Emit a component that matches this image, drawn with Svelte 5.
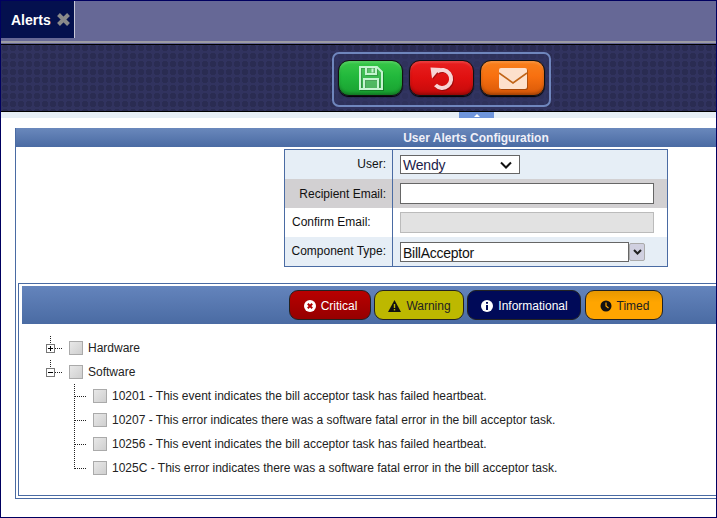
<script>
  const children = [
    '10201 - This event indicates the bill acceptor task has failed heartbeat.',
    '10207 - This error indicates there was a software fatal error in the bill acceptor task.',
    '10256 - This event indicates the bill acceptor task has failed heartbeat.',
    '1025C - This error indicates there was a software fatal error in the bill acceptor task.'
  ];
</script>

<div class="page">
  <div class="tabbar">
    <div class="tab">
      <span>Alerts</span>
      <svg width="15" height="15" viewBox="0 0 15 15"><path d="M2.5 2.5 12.5 12.5M12.5 2.5 2.5 12.5" stroke="#8a8a8a" stroke-width="4" /></svg>
    </div>
  </div>
  <div class="rule"></div>
  <div class="band">
    <div class="group">
      <button class="big green" aria-label="Save">
        <svg class="glyph" width="24" height="24" viewBox="0 0 24 24" fill="rgba(255,255,255,.12)" stroke="#c4f4d0" stroke-width="2"><path d="M1 1H18L23 6V23H1Z"/><path d="M7 1V8H17V1M13.5 2.5V6.5" /><path d="M5 23V13H19V23"/></svg>
      </button>
      <button class="big red" aria-label="Undo">
        <svg class="glyph" width="26" height="26" viewBox="0 0 26 26" fill="none"><path d="M8 6.5A9 9 0 1 1 6.5 20" stroke="#f8d4d4" stroke-width="4"/><path d="M1.5 2.5 12 3 3 13.5Z" fill="#f8d4d4"/></svg>
      </button>
      <button class="big orange" aria-label="Mail">
        <svg class="glyph" width="28" height="21" viewBox="0 0 28 21"><rect x="0" y="0" width="28" height="21" rx="2" fill="#fde0cc"/><path d="M0 5 14 15 28 5" fill="none" stroke="#c06418" stroke-width="1.6"/></svg>
      </button>
    </div>
  </div>
  <div class="strip"><div class="handle"><i></i></div></div>

  <div class="panel">
    <div class="title">User Alerts Configuration</div>
    <div class="form">
      <div class="row blue"><label>User:</label><div class="cell"><div class="select"><span>Wendy</span><svg width="12" height="8" viewBox="0 0 12 8"><path d="M1 1.5 6 6.5 11 1.5" fill="none" stroke="#111" stroke-width="2"/></svg></div></div></div>
      <div class="row gray"><label>Recipient Email:</label><div class="cell"><div class="input"></div></div></div>
      <div class="row white"><label class="start">Confirm Email:</label><div class="cell"><div class="input off"></div></div></div>
      <div class="row blue"><label>Component Type:</label><div class="cell combo"><div class="input value">BillAcceptor</div><div class="drop"><svg width="9" height="6" viewBox="0 0 9 6"><path d="M1 1 4.5 4.5 8 1" fill="none" stroke="#222" stroke-width="2"/></svg></div></div></div>
    </div>

    <div class="inner">
      <div class="toolbar">
        <button class="chip critical">
          <svg width="12" height="12" viewBox="0 0 12 12"><circle cx="6" cy="6" r="6" fill="#fff"/><path d="M3.8 3.8 8.2 8.2M8.2 3.8 3.8 8.2" stroke="#b00000" stroke-width="2"/></svg>Critical
        </button>
        <button class="chip warning">
          <svg width="13" height="12" viewBox="0 0 13 12"><path d="M6.5 0 13 12H0Z" fill="#111"/><path d="M6.5 4V8M6.5 9V10.5" stroke="#bdb800" stroke-width="1.4"/></svg>Warning
        </button>
        <button class="chip info">
          <svg width="12" height="12" viewBox="0 0 12 12"><circle cx="6" cy="6" r="6" fill="#fff"/><path d="M6 5V10M6 2V3.8" stroke="#000a58" stroke-width="2"/></svg>Informational
        </button>
        <button class="chip timed">
          <svg width="12" height="12" viewBox="0 0 12 12"><circle cx="6" cy="6" r="5.5" fill="#111"/><path d="M6 2.5V6L8.5 8" fill="none" stroke="#ffa500" stroke-width="1.2"/></svg>Timed
        </button>
      </div>

      <div class="tree">
        <div class="node">
          <svg class="twig" width="27" height="24" viewBox="0 0 27 24"><path d="M8.5 0V8M13 12.5H21" stroke="#222" stroke-dasharray="1 1" fill="none"/><rect x="4.5" y="8.5" width="8" height="8" fill="#fff" stroke="#777"/><path d="M6 12.5H11M8.5 10V15" stroke="#000"/></svg>
          <span class="check"></span><span>Hardware</span>
        </div>
        <div class="node">
          <svg class="twig" width="27" height="24" viewBox="0 0 27 24"><path d="M8.5 0V8M13 12.5H21" stroke="#222" stroke-dasharray="1 1" fill="none"/><rect x="4.5" y="8.5" width="8" height="8" fill="#fff" stroke="#777"/><path d="M6 12.5H11" stroke="#000"/></svg>
          <span class="check"></span><span>Software</span>
        </div>
        {#each children as text, i}
          <div class="node">
            <svg class="twig" width="51" height="24" viewBox="0 0 51 24"><path d={i === 3 ? 'M32.5 0V13M33 12.5H45' : 'M32.5 0V24M33 12.5H45'} stroke="#222" stroke-dasharray="1 1" fill="none"/></svg>
            <span class="check"></span><span>{text}</span>
          </div>
        {/each}
      </div>
    </div>
  </div>
</div>

<style>
  :global(body) { margin: 0; background: #fff; }
  .page {
    box-sizing: border-box; width: 717px; height: 518px; overflow: hidden;
    border: 1px solid #000060; font: 12px "Liberation Sans", Arial, sans-serif; color: #111; background: #fff;
  }
  button { font: inherit; padding: 0; cursor: pointer; }
  .tabbar { height: 40px; background: #666896; display: flex; align-items: flex-start; }
  .tab {
    box-sizing: border-box; width: 74px; height: 37px; background: #04104e; border-right: 1px solid #c8c8d8;
    color: #fff; font-weight: bold; display: flex; align-items: center; gap: 5px; padding-left: 10px;
  }
  .tab span { font-size: 14px; }
  .rule { height: 4px; box-sizing: border-box; background: #666896; border-top: 2px solid #9c9ca4; border-bottom: 1px solid #000; }
  .band {
    height: 67px; box-sizing: border-box; padding: 7px 0 0 331px; display: flex;
    border-bottom: 1px solid #000;
    background: #31335f radial-gradient(circle at 4px 4px, #2a2c52 3px, transparent 3.5px) 0 -1px / 8px 8px;
  }
  .group {
    box-sizing: border-box; width: 219px; height: 55px; border: 2px solid #6f86bd; border-radius: 7px;
    display: flex; gap: 6px; padding: 6px 4px; background: rgba(50, 54, 100, .5);
  }
  .big {
    box-sizing: border-box; width: 65px; height: 36px; border: 1px solid #111; border-radius: 11px;
    display: flex; align-items: center; justify-content: center;
    box-shadow: 0 1px 1px #000, inset 0 -2px 3px rgba(0, 0, 0, .25), inset 0 2px 2px rgba(255, 255, 255, .14);
  }
  .glyph { filter: drop-shadow(1px 1px 0 rgba(0, 0, 0, .25)); }
  .green { background: linear-gradient(#38c848, #22b83c 45%, #18a030); }
  .red { background: linear-gradient(#e82020, #e01010 50%, #c40a0a); }
  .orange { background: linear-gradient(#f8801c, #f87010 45%, #d85808); }
  .strip { height: 6px; background: #e6eef6; position: relative; }
  .handle {
    position: absolute; left: 458px; top: 0; width: 35px; height: 6px; background: #6f95dc;
    display: flex; align-items: center; justify-content: center;
  }
  .handle i { width: 0; height: 0; border: 3px solid transparent; border-top: 0; border-bottom-color: #fff; }
  .panel {
    box-sizing: border-box; width: 701px; margin: 10px 0 0 14px; height: 371px;
    border-left: 1px solid #4a6ba3; border-bottom: 1px solid #4a6ba3;
  }
  .title {
    height: 19px; line-height: 20px; text-align: center; font-weight: bold; color: #f0f0f8; padding-left: 220px;
    background: linear-gradient(#6a88bc, #4a6ba3);
  }
  .form {
    box-sizing: border-box; width: 384px; height: 118px; margin: 2px 0 0 268px; border: 1px solid #4a6ba3;
    display: flex; flex-direction: column;
  }
  .row { flex: 1; display: grid; grid-template-columns: 108px 1fr; }
  .blue { background: #e6eef6; } .gray { background: #d2d0d2; } .white { background: #fff; }
  label { display: flex; align-items: center; justify-content: flex-end; padding: 0 6px 2px 0; border-right: 1px solid #4a6ba3; }
  .gray label { padding-bottom: 0; }
  label.start { justify-content: flex-start; padding-left: 7px; }
  .cell { display: flex; align-items: center; padding-left: 7px; }
  .select {
    box-sizing: border-box; width: 120px; height: 19px; border: 1px solid #666; background: #fff;
    display: flex; justify-content: space-between; align-items: center; padding: 0 7px 0 2px; font-size: 14px; color: #1c1c4a;
    letter-spacing: -0.2px;
  }
  .input { box-sizing: border-box; width: 254px; height: 21px; border: 1px solid #666; background: #fff; }
  .input.off { background: #e2e2e2; border-color: #bbb; }
  .input.value { width: 229px; height: 20px; line-height: 20px; padding-left: 2px; font-size: 14px; letter-spacing: -0.25px; }
  .drop {
    box-sizing: border-box; width: 16px; height: 18px; background: #d0d0e0; border: 1px solid #aaa; border-radius: 2px;
    display: flex; align-items: center; justify-content: center;
  }
  .inner {
    box-sizing: border-box; margin: 16px 0 0 2px; height: 213px; width: 698px;
    border: solid #4a6ba3; border-width: 1px 0 1px 1px; padding: 2px 0 0 3px;
  }
  .toolbar {
    height: 38px; box-sizing: border-box; padding: 4px 0 0 267px; display: flex; gap: 3px;
    background: linear-gradient(#6484bc, #4a6ba3);
  }
  .chip {
    box-sizing: border-box; height: 30px; border: 1px solid #222; border-radius: 9px; padding: 1px 0 0 1px;
    display: flex; align-items: center; justify-content: center; gap: 5px;
  }
  .critical { width: 82px; background: linear-gradient(#b80000, #960000); color: #fff; }
  .warning { width: 90px; background: #bdb800; color: #222; }
  .info { width: 114px; background: #000a58; color: #fff; margin-right: 1px; }
  .timed { width: 78px; background: linear-gradient(#e89800, #ffa500 40%); color: #222; }
  .tree { padding-top: 12px; }
  .node { height: 24px; display: flex; align-items: center; padding-left: 20px; color: #222; }
  .twig { flex: none; }
  .check {
    box-sizing: border-box; width: 14px; height: 14px; margin-right: 5px; flex: none;
    border: 1px solid #aaa; background: linear-gradient(135deg, #e8e8e8, #cfcfcf);
  }
</style>
